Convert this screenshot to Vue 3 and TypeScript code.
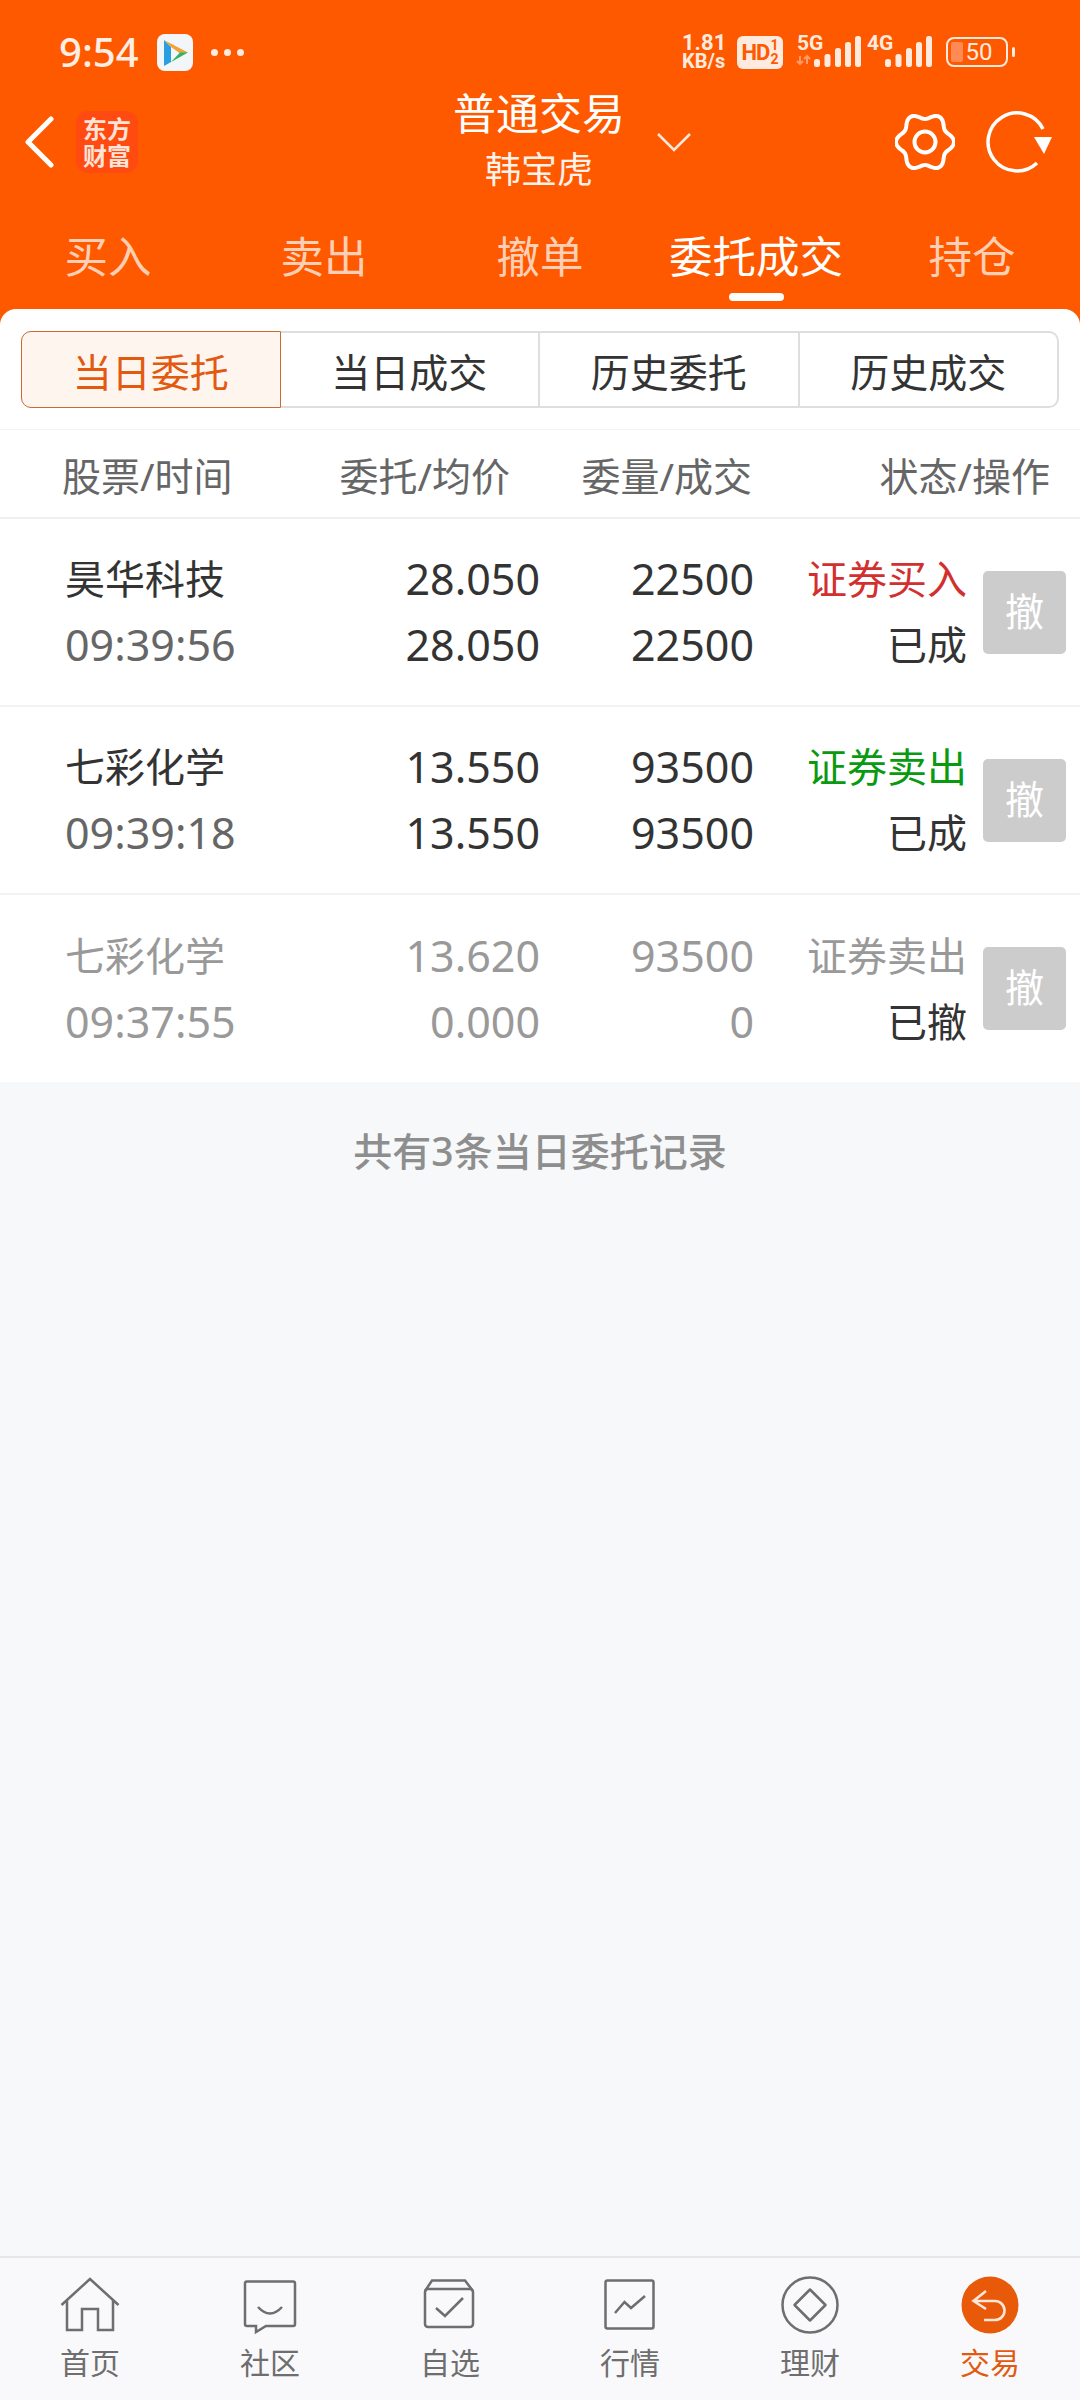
<script setup lang="ts">
// trade orders screen: orange header, segmented filter, order table, bottom nav
interface Order {
  name: string; time: string; price: string; avg: string; qty: string; done: string
  side: string; state: string; tone: 'buy' | 'sell' | 'off'
}
const tabs = ['买入', '卖出', '撤单', '委托成交', '持仓']
const segs = ['当日委托', '当日成交', '历史委托', '历史成交']
const orders: Order[] = [
  { name: '昊华科技', time: '09:39:56', price: '28.050', avg: '28.050', qty: '22500', done: '22500', side: '证券买入', state: '已成', tone: 'buy' },
  { name: '七彩化学', time: '09:39:18', price: '13.550', avg: '13.550', qty: '93500', done: '93500', side: '证券卖出', state: '已成', tone: 'sell' },
  { name: '七彩化学', time: '09:37:55', price: '13.620', avg: '0.000', qty: '93500', done: '0', side: '证券卖出', state: '已撤', tone: 'off' },
]
const navs = ['首页', '社区', '自选', '行情', '理财', '交易']
const bars = [
  { x: 0, h: 8 }, { x: 10.5, h: 13 }, { x: 21, h: 19 }, { x: 31, h: 25 }, { x: 41, h: 31 },
]

// six soft lobes round the settings icon
const gear = (() => {
  const pts: string[] = []
  for (let i = 0; i < 120; i++) {
    const a = (i / 120) * Math.PI * 2
    const r = 26 + 3 * Math.cos(6 * a)
    pts.push(`${(30 + r * Math.cos(a)).toFixed(2)} ${(30 + r * Math.sin(a)).toFixed(2)}`)
  }
  return 'M' + pts.join('L') + 'Z'
})()
</script>

<template>
  <div class="page">
    <header class="head">
      <div class="status">
        <span class="clock">9:54</span>
        <svg class="app" width="36" height="37" viewBox="0 0 36 37">
          <rect width="36" height="37" rx="8" fill="#f3f6f9" />
          <path d="M7 6 L7 32 L14 28 L14 13Z" fill="#2a9fe0" />
          <path d="M7 6 L31 18.5 L24 20 L14 13Z" fill="#f2a23a" />
          <path d="M31 18.5 L7 32 L14 28 L23 18.5Z" fill="#2fb565" />
        </svg>
        <span class="dots"><i></i><i></i><i></i></span>
        <div class="sys">
          <div class="speed"><span>1.81</span><span>KB/s</span></div>
          <div class="hd"><b>HD</b><span class="hd-n"><em>1</em><em>2</em></span></div>
          <svg class="net" width="64" height="32" viewBox="0 0 64 32">
            <text x="0" y="14" class="net-t">5G</text>
            <path d="M3 20v8M0 25l3 3 3-3M10 28v-8M7 23l3-3 3 3" stroke="#ff9a6c" stroke-width="2" fill="none" />
            <rect v-for="b in bars" :key="b.x" :x="b.x + 17" :y="31 - b.h" width="6" :height="b.h" rx="2.5" fill="#ffeadf" />
          </svg>
          <svg class="net net-b" width="66" height="32" viewBox="0 0 66 32">
            <text x="0" y="14" class="net-t">4G</text>
            <rect v-for="b in bars" :key="b.x" :x="b.x + 18" :y="31 - b.h" width="6" :height="b.h" rx="2.5" fill="#ffeadf" />
          </svg>
          <div class="batt"><span class="batt-fill"></span><span class="batt-n">50</span></div>
          <span class="nub"></span>
        </div>
      </div>

      <div class="nav">
        <svg class="back" width="30" height="52" viewBox="0 0 30 52"><path d="M27 3 L4 26 L27 49" /></svg>
        <div class="logo"><span>东方</span><span>财富</span></div>
        <div class="title">
          <div class="title-a">普通交易</div>
          <div class="title-b">韩宝虎</div>
        </div>
        <svg class="drop" width="36" height="20" viewBox="0 0 36 20"><path d="M2 2 L18 18 L34 2" /></svg>
        <svg class="gear" width="60" height="60" viewBox="0 0 60 60">
          <path :d="gear" />
          <circle cx="30" cy="30" r="10.5" />
        </svg>
        <svg class="reload" width="66" height="62" viewBox="0 0 66 62">
          <path d="M51 52 A29 29 0 1 1 57 18" />
          <path class="tip" d="M48 26 H66 L58 43Z" />
        </svg>
      </div>

      <div class="tabs">
        <div v-for="(t, i) in tabs" :key="t" class="tab" :class="{ on: i === 3 }">
          <span>{{ t }}</span>
          <i class="mark"></i>
        </div>
      </div>
    </header>

    <div class="panel-wrap">
      <section class="panel">
        <div class="segs">
          <div v-for="(s, i) in segs" :key="s" class="seg" :class="{ on: i === 0 }">{{ s }}</div>
        </div>
        <div class="thead">
          <span class="th-first">股票/时间</span>
          <span>委托/均价</span>
          <span>委量/成交</span>
          <span>状态/操作</span>
        </div>
        <div v-for="o in orders" :key="o.time" class="row" :class="o.tone">
          <div class="c-name"><div class="nm">{{ o.name }}</div><div class="tm">{{ o.time }}</div></div>
          <div class="c-num"><div>{{ o.price }}</div><div>{{ o.avg }}</div></div>
          <div class="c-num"><div>{{ o.qty }}</div><div>{{ o.done }}</div></div>
          <div class="c-num"><div class="side">{{ o.side }}</div><div class="state">{{ o.state }}</div></div>
          <div class="btn">撤</div>
        </div>
      </section>
    </div>

    <div class="tally">共有3条当日委托记录</div>
    <div class="grow"></div>

    <nav class="bottom">
      <div v-for="(n, i) in navs" :key="n" class="item" :class="{ on: i === 5 }">
        <svg width="60" height="60" viewBox="0 0 60 60" class="ico">
          <template v-if="i === 0">
            <path d="M1.5 29 L30 3 L58.5 29 M7 24 V54 H22 V33 H38 V54 H53 V24" />
          </template>
          <template v-else-if="i === 1">
            <path d="M7 5.5 H53 a2 2 0 0 1 2 2 V48 a2 2 0 0 1 -2 2 H26 L16 56 V50 H7 a2 2 0 0 1 -2 -2 V7.5 a2 2 0 0 1 2 -2Z" />
            <path d="M18 31 Q30 44 42 31" />
          </template>
          <template v-else-if="i === 2">
            <rect x="5" y="13" width="48" height="38" rx="3" />
            <path d="M5 15 L12 4.5 H45 L53 15 M16 32 L25 40 L43 22" />
          </template>
          <template v-else-if="i === 3">
            <rect x="5.5" y="4.5" width="48" height="48" rx="2" />
            <path d="M15 37 L24.5 26 L31 32 L45 20" />
          </template>
          <template v-else-if="i === 4">
            <circle cx="30" cy="29" r="27.5" />
            <path d="M30 13.5 L45.5 29 L30 44.5 L14.5 29Z" stroke-linejoin="round" />
          </template>
          <template v-else>
            <circle class="fill" cx="30" cy="29" r="28.5" />
            <path class="arrow" d="M26 15 L13.5 25 L26 33 M14 25 H35 a9.5 9.5 0 0 1 0 19 H24" />
          </template>
        </svg>
        <span class="lbl">{{ n }}</span>
      </div>
    </nav>
  </div>
</template>

<style scoped>
.page {
  width: 1080px; height: 2400px; display: flex; flex-direction: column; overflow: hidden;
  background: #f7f8fa; color: #333;
  font-family: "Noto Sans", "Noto Sans CJK SC", sans-serif;
}

.head { background: #ff5900; color: #fff; }

.status { height: 104px; display: flex; align-items: center; padding: 0 65px 0 59px; box-sizing: border-box; }
.clock { font-size: 40px; font-weight: 500; color: #ffeee5; width: 98px; line-height: 1; }
.app { display: block; }
.dots { display: flex; gap: 6px; margin-left: 18px; }
.dots i { width: 7px; height: 7px; border-radius: 50%; background: #ffeadf; }
.sys { margin-left: auto; display: flex; align-items: center; color: #ffeadf; }
.speed { display: flex; flex-direction: column; font-family: Roboto, sans-serif; font-weight: 700; width: 55px; line-height: 18px; }
.speed span:first-child { font-size: 22px; }
.speed span:last-child { font-size: 20px; }
.hd {
  width: 46px; height: 33px; background: #ffeadf; border-radius: 6px; color: #ff5900; display: flex;
  align-items: center; justify-content: center; font-family: Roboto, sans-serif;
}
.hd b { font-size: 22px; letter-spacing: -1px; }
.hd-n { display: flex; flex-direction: column; margin-left: 1px; }
.hd-n em { font-style: normal; font-weight: 700; font-size: 14px; line-height: 14px; }
.net { display: block; margin-left: 14px; overflow: visible; }
.net-b { margin-left: 6px; }
.net-t { font-family: Roboto, sans-serif; font-weight: 700; font-size: 21px; fill: #ffeadf; }
.batt {
  position: relative; margin-left: 13px; width: 62px; height: 30px; box-sizing: border-box;
  border: 2.5px solid #ffeadf; border-radius: 8px; display: flex; align-items: center; justify-content: center;
}
.batt-fill { position: absolute; left: 3px; top: 3px; bottom: 3px; width: 12px; background: #ff8a55; border-radius: 2px; }
.batt-n { position: relative; font-size: 24px; line-height: 1; color: #ffeadf; font-family: Roboto, sans-serif; margin-left: 4px; }
.nub { width: 3px; height: 10px; background: #ffeadf; margin-left: 4px; border-radius: 2px; }

.nav { height: 76px; display: flex; align-items: center; }
.back { margin-left: 24px; }
.back path { fill: none; stroke: #fff; stroke-width: 5; stroke-linecap: round; stroke-linejoin: round; }
.logo {
  width: 62px; height: 62px; margin-left: 22px; border-radius: 12px; background: #ff4a12;
  display: flex; flex-direction: column; align-items: center; justify-content: center;
  font-size: 24px; font-weight: 700; line-height: 27px; color: #ffe3d6;
}
.title { margin-left: 313px; width: 176px; text-align: center; white-space: nowrap; }
.title-a { font-size: 43px; line-height: 54px; }
.title-b { font-size: 36px; line-height: 54px; color: #fff2ea; padding-top: 2px; }
.drop { margin-left: 29px; }
.drop path { fill: none; stroke: #ffeadf; stroke-width: 2.5; }
.gear { margin-left: 203px; }
.gear path, .gear circle { fill: none; stroke: #fff; stroke-width: 4; }
.reload { margin-left: 31px; }
.reload path { fill: none; stroke: #fff; stroke-width: 3.5; }
.reload .tip { fill: #fff; stroke: none; }

.tabs { display: grid; grid-template-columns: repeat(5, 1fr); padding-top: 46px; height: 129px; box-sizing: border-box; }
.tab { display: flex; flex-direction: column; align-items: center; font-size: 43.5px; line-height: 60px; color: #ffcfb5; }
.tab.on { color: #fff; }
.mark { width: 55px; height: 8px; margin-top: 7px; border-radius: 4px; }
.tab.on .mark { background: #fff; }

.panel-wrap { background: #ff5900; }
.panel { background: #fff; border-radius: 16px 16px 0 0; }

.segs { display: grid; grid-template-columns: repeat(4, 1fr); padding: 22px 21px 21px; }
.seg {
  height: 77px; box-sizing: border-box; border: 2px solid #dedede; border-left: 0;
  display: flex; align-items: center; justify-content: center; font-size: 39px; color: #333;
}
.seg:first-child { border-radius: 10px 0 0 10px; }
.seg:last-child { border-radius: 0 10px 10px 0; }
.seg.on { background: #fff5ef; border: 1.5px solid #c96a33; color: #e2590f; }

.thead {
  height: 90px; box-sizing: border-box; border-top: 1px solid #f4f4f4; border-bottom: 2px solid #efefef;
  display: grid; grid-template-columns: 201px 247px 242px 298px; padding-left: 62px; align-items: center;
  font-size: 39px; color: #666; text-align: right;
}
.th-first { text-align: left; }

.row {
  height: 188px; box-sizing: border-box; border-bottom: 2px solid #f2f2f2; padding-left: 65px;
  display: grid; grid-template-columns: 175px 300px 214px 213px 83px; align-items: center;
  font-size: 43px; line-height: 66px; color: #333;
}
.row:last-child { border-bottom: 0; height: 187px; }
.nm, .side, .state { font-size: 40px; }
.tm { color: #666; }
.c-num { text-align: right; white-space: nowrap; }
.c-name { white-space: nowrap; }
.buy .side { color: #d32f2f; }
.sell .side { color: #0a9a12; }
.off .nm, .off .tm, .off .c-num, .off .side { color: #999; }
.off .state { color: #333; }
.btn {
  grid-column: 5; width: 83px; height: 83px; margin-left: 16px; background: #ccc; border-radius: 5px;
  color: #fff; font-size: 39px; line-height: 79px; text-align: center;
}

.tally { padding-top: 44px; box-sizing: border-box; text-align: center; font-size: 39px; line-height: 49px; font-weight: 500; color: #8e8e8e; }
.grow { flex: 1; }

.bottom {
  height: 144px; box-sizing: border-box; border-top: 2px solid #e6e6e8; background: #f9f9fb;
  display: grid; grid-template-columns: repeat(6, 1fr); padding-top: 18px;
}
.item { display: flex; flex-direction: column; align-items: center; color: #6e6e6e; }
.item.on { color: #e2590f; }
.ico { display: block; fill: none; stroke: #6e6e6e; stroke-width: 2.5; }
.ico .fill { fill: #e8590a; stroke: none; }
.ico .arrow { stroke: #ffe6d8; stroke-width: 2.6; }
.lbl { font-size: 30px; line-height: 40px; margin-top: 7px; }
</style>

<style>
html, body { margin: 0; padding: 0; background: #f7f8fa; }
</style>
